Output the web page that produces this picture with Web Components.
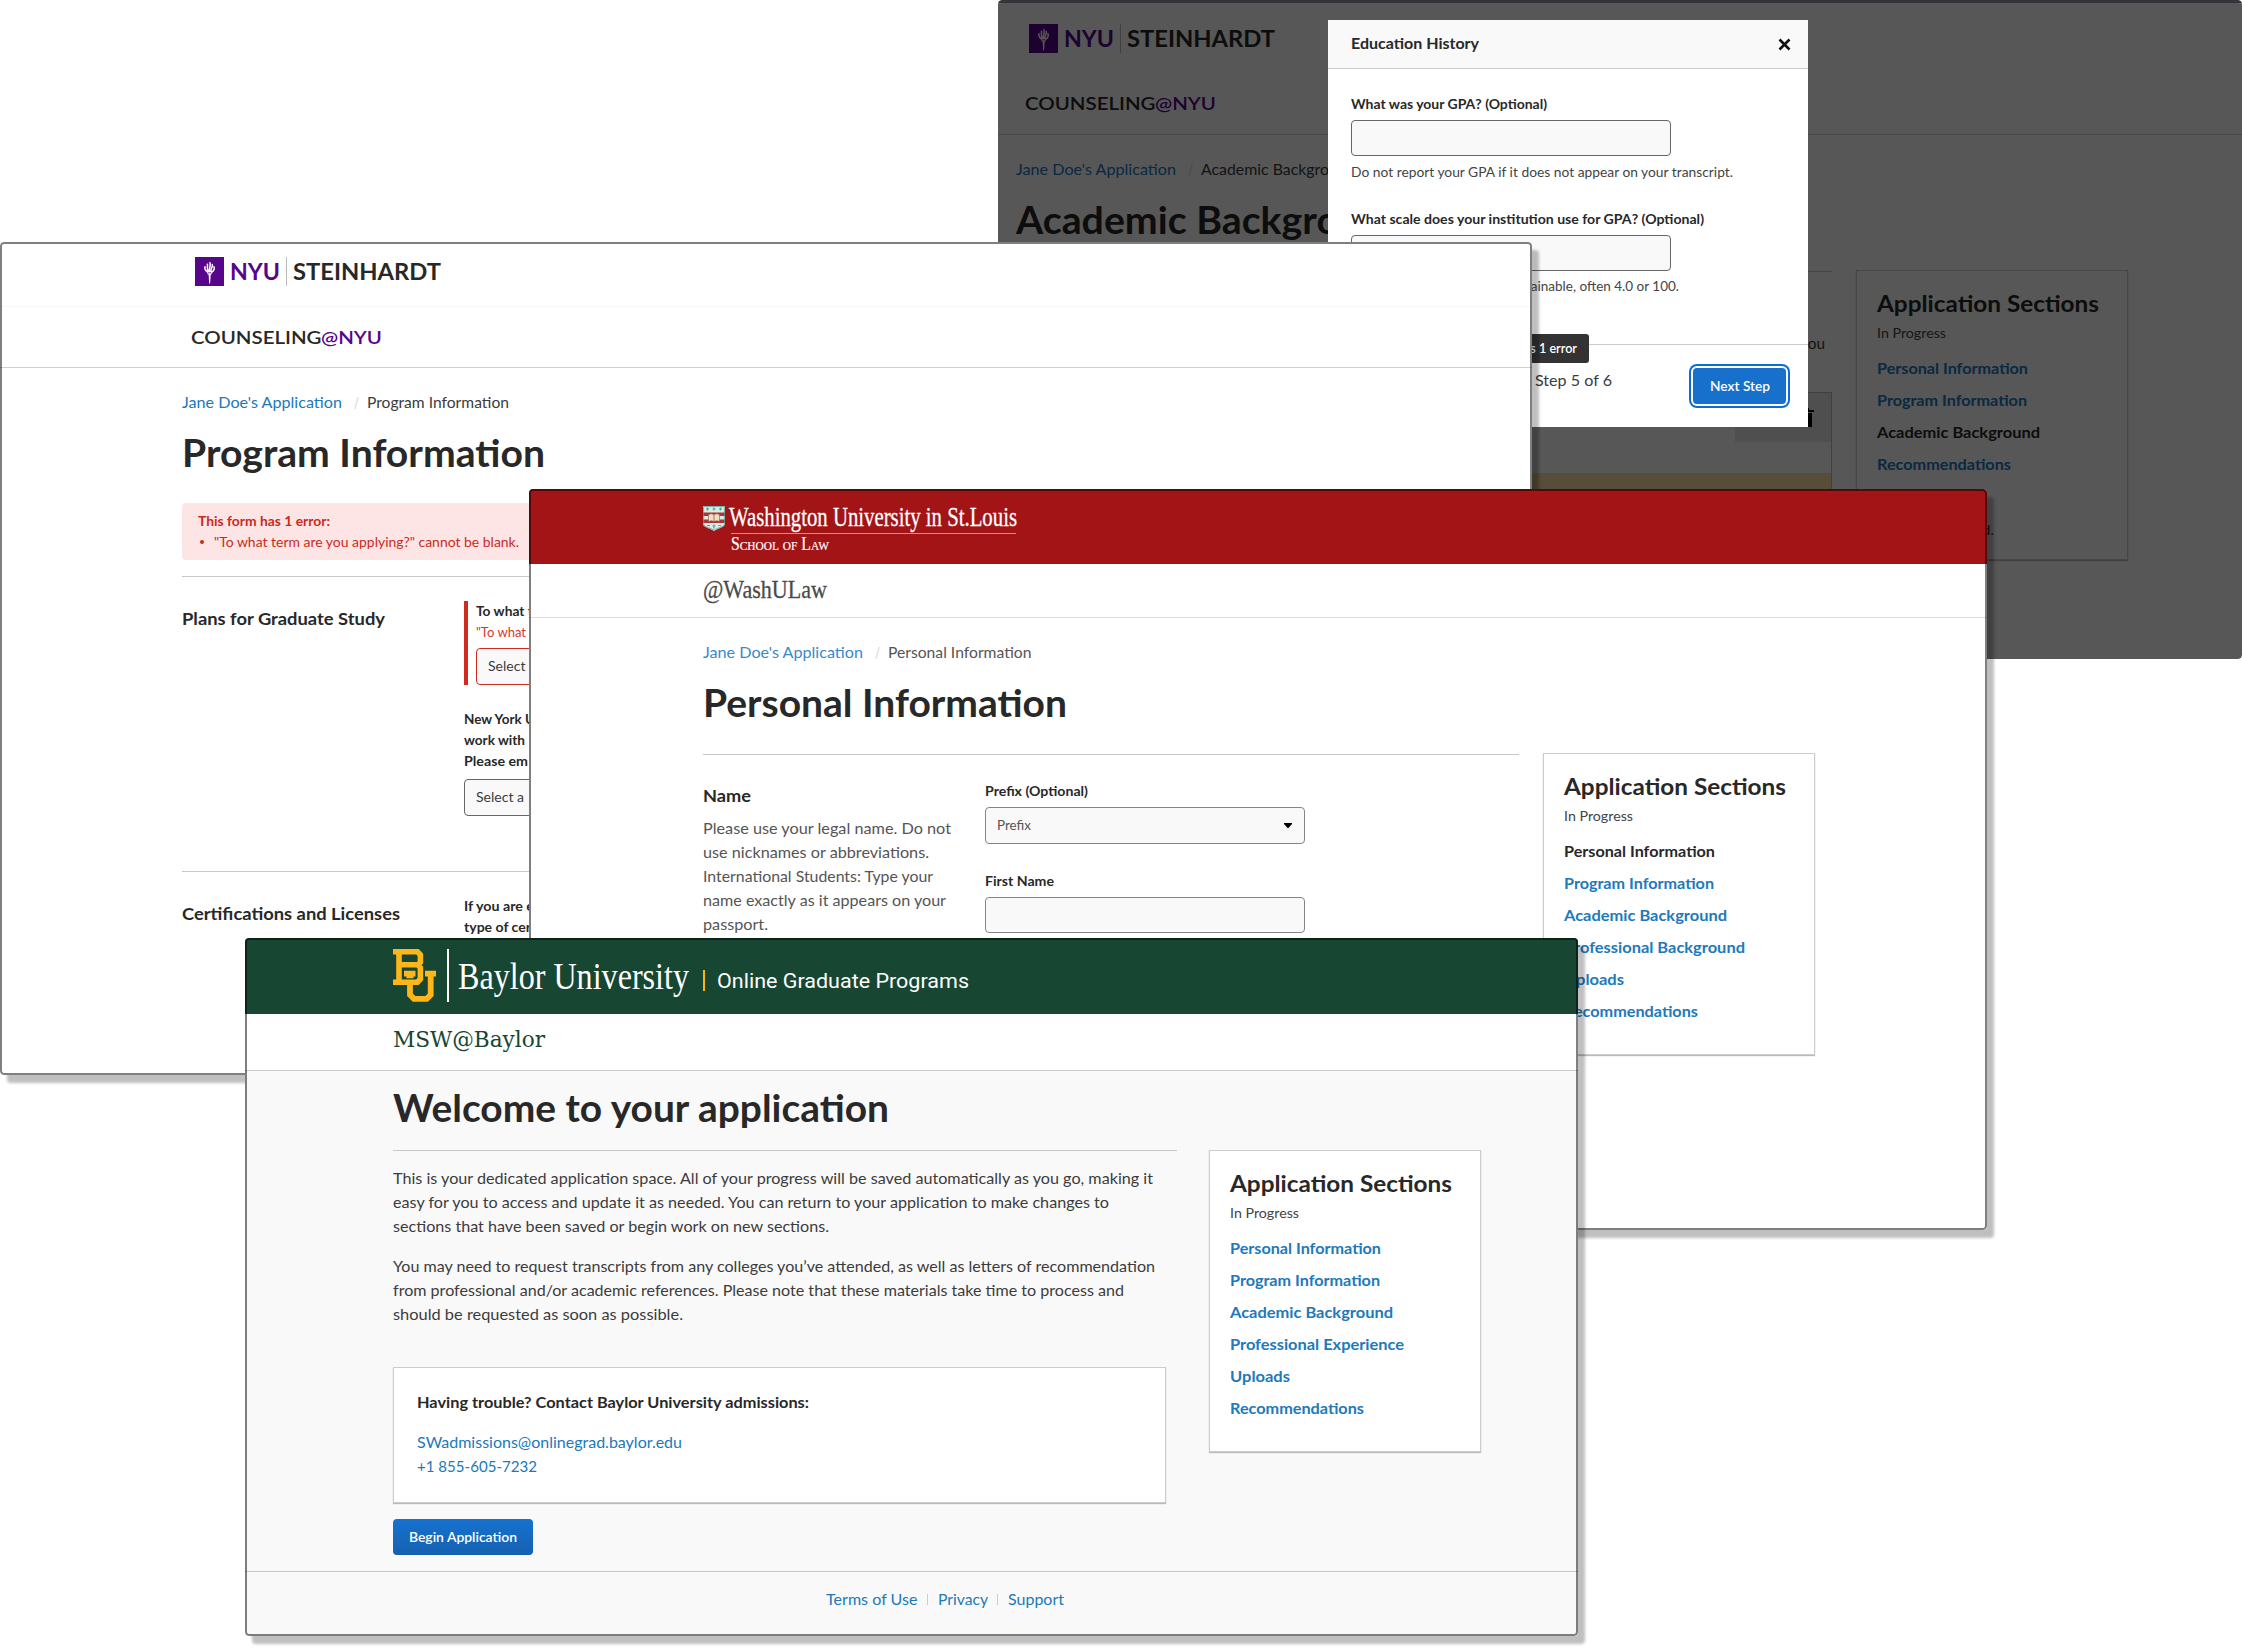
<!DOCTYPE html>
<html lang="en">
<head>
<meta charset="utf-8">
<title>Application portals</title>
<style>
html,body{margin:0;padding:0;background:#fff}
body{width:2242px;height:1648px;position:relative;overflow:hidden;font-family:Lato,sans-serif;color:#282828}
app-window{position:absolute}
.link{color:#2079bb}
.body{color:#3c3c3c}
.row{display:flex}
.col{display:flex;flex-direction:column}
.sep{width:1px;background:#ccc}
</style>
</head>
<body>

<app-window style="left:998px;top:0;width:1244px;height:659px" flat>
  <nyu-header style="--top:24px;--pad:30.5px"></nyu-header>
  <div class="row" style="padding-left:18px;gap:24px">
    <div class="col" style="width:816px">
      <crumb-trail page="Academic Backgro" page-width="128"></crumb-trail>
      <t-l d="59" s="38" w="323" b>Academic Backgro</t-l>
      <rule-line style="margin-top:37px"></rule-line>
      <t-l class="body" d="77" s="16" w="25" style="margin-left:784px">you</t-l>
      <record-table style="margin-top:43px"></record-table>
    </div>
    <section-card style="margin-top:135px;height:290px">
      <section-item w="151">Personal Information</section-item>
      <section-item w="150">Program Information</section-item>
      <section-item w="163" current>Academic Background</section-item>
      <section-item w="134">Recommendations</section-item>
      <t-l class="body" d="65" s="14" w="12" style="margin-left:105px">d.</t-l>
    </section-card>
  </div>
  <div slot="over"><history-dialog></history-dialog></div>
</app-window>

<app-window style="left:0;top:242px;width:1532px;height:833px">
  <nyu-header style="--top:15px;--pad:194.5px" tint></nyu-header>
  <div class="col" style="margin-left:182px;width:816px">
    <crumb-trail page="Program Information" page-width="142"></crumb-trail>
    <t-l d="59" s="38" w="363" b>Program Information</t-l>
    <error-box style="margin-top:36px"></error-box>
    <rule-line style="margin-top:16px"></rule-line>
    <div class="row" style="height:294px">
      <t-l d="48" s="17.5" w="203" b style="margin-right:79px">Plans for Graduate Study</t-l>
      <div class="col" style="padding-top:24px">
        <form-field invalid label="To what t" label-width="57" error='"To what t' error-width="58" value="Select a" value-width="48" select style="--w:308px"></form-field>
        <t-l d="39" s="13.3" w="71" b>New York U</t-l>
        <t-l d="21" s="13.3" w="61" b>work with</t-l>
        <t-l d="21" s="13.3" w="64" b>Please em</t-l>
        <form-field value="Select a" value-width="48" select style="--w:320px;margin-top:-8px"></form-field>
      </div>
    </div>
    <rule-line></rule-line>
    <div class="row">
      <t-l d="48" s="17.5" w="218" b style="margin-right:64px">Certifications and Licenses</t-l>
      <div class="col">
        <t-l d="39" s="13.3" w="70" b>If you are e</t-l>
        <t-l d="21" s="13.3" w="67" b>type of cer</t-l>
      </div>
    </div>
  </div>
</app-window>

<app-window style="left:529px;top:489px;width:1458px;height:741px">
  <washu-header></washu-header>
  <div class="row" style="padding-left:174px;gap:24px">
    <div class="col" style="width:816px">
      <crumb-trail page="Personal Information" page-width="143.5" soft></crumb-trail>
      <t-l d="59" s="38" w="364" b>Personal Information</t-l>
      <rule-line style="margin-top:37px"></rule-line>
      <div class="row">
        <div class="col" style="width:282px;color:#555">
          <t-l d="47" s="17.5" w="48" b style="color:#282828">Name</t-l>
          <t-l d="32" s="16" w="248">Please use your legal name. Do not</t-l>
          <t-l d="24" s="16" w="226">use nicknames or abbreviations.</t-l>
          <t-l d="24" s="16" w="230">International Students: Type your</t-l>
          <t-l d="24" s="16" w="243">name exactly as it appears on your</t-l>
          <t-l d="24" s="16" w="65">passport.</t-l>
        </div>
        <div class="col" style="padding-top:20px;gap:21px">
          <form-field label="Prefix (Optional)" label-width="103" value="Prefix" value-width="34" select style="--w:320px;--edge:#858585;--ink:#555"></form-field>
          <form-field label="First Name" label-width="69" style="--w:320px;--edge:#858585"></form-field>
        </div>
      </div>
    </div>
    <section-card style="margin-top:135px;height:302px">
      <section-item w="151" current>Personal Information</section-item>
      <section-item w="150">Program Information</section-item>
      <section-item w="163">Academic Background</section-item>
      <section-item w="181">Professional Background</section-item>
      <section-item w="60">Uploads</section-item>
      <section-item w="134">Recommendations</section-item>
    </section-card>
  </div>
</app-window>

<app-window style="left:245px;top:938px;width:1333px;height:698px;--bg:#f9f9f9">
  <baylor-header></baylor-header>
  <div class="row" style="padding-left:148px;gap:32px;height:500px">
    <div class="col" style="width:784px">
      <t-l d="51" s="38" w="496" b>Welcome to your application</t-l>
      <rule-line style="margin-top:28px"></rule-line>
      <div class="body">
        <t-l d="33" s="16" w="760">This is your dedicated application space. All of your progress will be saved automatically as you go, making it</t-l>
        <t-l d="24" s="16" w="716">easy for you to access and update it as needed. You can return to your application to make changes to</t-l>
        <t-l d="24" s="16" w="436">sections that have been saved or begin work on new sections.</t-l>
        <t-l d="40" s="16" w="762">You may need to request transcripts from any colleges you’ve attended, as well as letters of recommendation</t-l>
        <t-l d="24" s="16" w="731">from professional and/or academic references. Please note that these materials take time to process and</t-l>
        <t-l d="24" s="16" w="290">should be requested as soon as possible.</t-l>
      </div>
      <help-card style="margin-top:47px">
        <t-l d="40" s="16" w="392" b>Having trouble? Contact Baylor University admissions:</t-l>
        <t-l class="link" d="40" s="16" w="265">SWadmissions@onlinegrad.baylor.edu</t-l>
        <t-l class="link" d="24" s="16" w="120">+1 855-605-7232</t-l>
      </help-card>
      <action-button style="margin-top:16px;--w:140px" w="108">Begin Application</action-button>
    </div>
    <section-card style="margin-top:79px;height:302px">
      <section-item w="151">Personal Information</section-item>
      <section-item w="150">Program Information</section-item>
      <section-item w="163">Academic Background</section-item>
      <section-item w="174">Professional Experience</section-item>
      <section-item w="60">Uploads</section-item>
      <section-item w="134">Recommendations</section-item>
    </section-card>
  </div>
  <rule-line></rule-line>
  <div class="row link" style="padding-left:581px;gap:9.5px;align-items:flex-end">
    <t-l d="33" s="16" w="91.5">Terms of Use</t-l>
    <span class="sep" style="height:11px"></span>
    <t-l d="33" s="16" w="50">Privacy</t-l>
    <span class="sep" style="height:11px"></span>
    <t-l d="33" s="16" w="56">Support</t-l>
  </div>
</app-window>

<script>
const component = (name, html, setup) => customElements.define(name, class extends HTMLElement {
  connectedCallback() {
    if (this.shadowRoot) return;
    const root = this.attachShadow({ mode: 'open' });
    root.innerHTML = typeof html === 'function' ? html(this) : html;
    if (setup) setup(this, root);
  }
});

component('app-window', `
<style>
:host{display:block;box-sizing:border-box;border-radius:4px;box-shadow:7px 8px 3px rgba(0,0,0,.25)}
:host([flat]){box-shadow:none}
.in{position:relative;height:100%;overflow:hidden;border-radius:4px;background:var(--bg,#fff)}
.edge{position:absolute;inset:0;border:2px solid rgba(0,0,0,.5);border-radius:4px;pointer-events:none}
:host([flat]) .edge{border:0;border-top:3px solid #33343a;background:rgba(0,0,0,.66);background-clip:padding-box}
</style>
<div class="in"><slot></slot><div class="edge"></div><slot name="over"></slot></div>`);

component('rule-line', `<style>:host{display:block;height:1px;background:#c8c8c8}</style>`);

component('nyu-header', `
<style>
:host{display:block;border-bottom:1px solid #d0d0d0}
.top{display:flex;padding:var(--top) 0 20px var(--pad);height:29px;align-items:flex-start}
:host([tint]) .sub{border-top:1px solid #f7f7f7}
.top svg{display:block;margin-right:6px}
.v{width:1.5px;height:29px;background:#bbb;margin:0 5.5px 0 6px}
.sub{display:flex;padding-left:calc(var(--pad) - 4px);height:61px;box-sizing:border-box}
.p{color:#57068c}
</style>
<div class="top">
<svg width="29" height="29" viewBox="0 0 29 29"><rect width="29" height="29" fill="#57068c"/>
<path fill="#fff" d="M12.2 16.2h4.8l-.4 1.2h-.9l-.6 9h-.9l-.6-9h-.9z"/>
<path fill="none" stroke="#fff" stroke-width="1.5" stroke-linecap="round" d="M12.6 15.2C10.500 13.600 9.300 12 10 9.800M13.400 14.700C11.500 11.500 12.800 9.500 12.400 7.200M14.600 14.800C13.600 11.500 16 9 15 5.700M15.800 14.800C15.600 12 18 10 17.300 7.400M16.800 15.200C18.500 14 19.800 12 19 9.800"/></svg>
<t-l class="p" d="23" s="23" w="50" b>NYU</t-l><div class="v"></div><t-l d="23" s="23" w="148" b>STEINHARDT</t-l>
</div>
<div class="sub"><t-l d="37" s="18" w="130.500" m>COUNSELING</t-l><t-l class="p" d="37" s="18" w="61" m>@NYU</t-l></div>`);

component('crumb-trail', el => `
<style>:host{display:flex;gap:12px;color:#3c3c3c}
.a{color:#2079bb}:host([soft]) .a{color:#3a8ac8}:host([soft]){color:#555}.s{color:#ccc}</style>
<t-l class="a" d="40" s="16" w="160">Jane Doe's Application</t-l>
<t-l class="s" d="40" s="16" w="5">/</t-l>
<t-l d="40" s="16" w="${el.getAttribute('page-width')}" style="margin-left:-4px">${el.getAttribute('page')}</t-l>`);

component('section-card', `
<style>:host{display:block;box-sizing:border-box;width:272px;flex:none;background:#fff;border:1px solid #ccc;box-shadow:0 1px 1px #bbb;padding-left:20px}
.s{color:#444}</style>
<t-l d="41" s="22.500" w="222" b>Application Sections</t-l>
<t-l class="s" d="26" s="13.300" w="69">In Progress</t-l>
<div style="height:4px"></div><slot></slot>`);

component('section-item', el => `
<style>:host{display:block;color:#2079bb}:host([current]){color:#282828}</style>
<t-l d="32" s="16" w="${el.getAttribute('w')}" b>${el.textContent}</t-l>`);

component('error-box', `
<style>:host{display:block;box-sizing:border-box;height:57px;padding-left:16px;background:#fde5e5;border-radius:4px;color:#cc2a1b}
div{display:flex;align-items:flex-end}i{width:4px;height:4px;border-radius:50%;background:#cc2a1b;margin:0 10px 3px 1.500px}</style>
<t-l d="23" s="13.300" w="132" b>This form has 1 error:</t-l>
<div><i></i><t-l d="21" s="13.300" w="305">"To what term are you applying?" cannot be blank.</t-l></div>`);

component('form-field', el => {
  const g = n => el.getAttribute(n);
  return `
<style>
:host{display:block}
:host([invalid]){border-left:4px solid #d12b1d;padding-left:8px;--edge:#d12b1d}
.e{color:#d8372a}
.box{box-sizing:border-box;width:var(--w);height:36px;margin-top:11px;border:1px solid var(--edge,#666);border-radius:4px;background:#f9f9f9;padding-left:11px;display:flex;color:var(--ink,#3c3c3c)}
:host([select]) .box{height:37px}
svg{margin:15px 12px 0 auto}
</style>
${g('label') ? `<t-l d="${g('invalid') === null ? 21 : 15}" s="13.3" w="${g('label-width')}" b>${g('label')}</t-l>` : '<div style="height:10px"></div>'}
${g('error') ? `<t-l class="e" d="21" s="13.3" w="${g('error-width')}">${g('error')}</t-l>` : ''}
<div class="box">${g('value') ? `<t-l d="22" s="13.3" w="${g('value-width')}">${g('value')}</t-l>` : ''}
${g('select') !== null ? '<svg width="8" height="5"><path d="M0 0h8v1L4.500 5h-1L0 1z" fill="#000"/></svg>' : ''}</div>`;
});

component('record-table', `
<style>:host{display:block;box-sizing:border-box;height:160px;border:1px solid #bbb}
.h{height:49px;display:flex;justify-content:flex-end}
.t{width:96px;background:#e6e6e6}
.w{height:60px;margin-top:31px;background:#ffe3a8}svg{display:block;margin:15px 0 0 63px}</style>
<div class="h"><div class="t"><svg width="17" height="19"><path fill="#000" d="M0 2h5V0h6v2h5v2H0zM2 5h12v14H2z"/></svg></div></div><div class="w"></div>`);

component('history-dialog', `
<style>
:host{position:absolute;left:330px;top:20px;width:480px;height:407px;background:#fff;display:block}
.hd{height:48px;background:#f9f9f9;border-bottom:1px solid #ccc;display:flex;padding:0 17px 0 23px;justify-content:space-between}
.hd svg{margin-top:17.500px}
.bd{padding:19px 23px 0;height:257px;box-sizing:border-box;display:flex;flex-direction:column}
.m{color:#444}
.ft{height:82px;border-top:1px solid #ccc;display:flex;justify-content:space-between;padding-left:207px;padding-right:22px}
.tip{position:absolute;left:140px;top:314px;width:121px;height:29px;box-sizing:border-box;background:#333;color:#fff;border-radius:3px;padding-right:12px;display:flex;justify-content:flex-end}
action-button{margin-top:23px}
</style>
<div class="hd"><t-l d="29" s="16" w="128" b>Education History</t-l><svg width="13" height="13"><path d="M1.500 1.500l10 10M11.500 1.500l-10 10" stroke="#111" stroke-width="2.600"/></svg></div>
<div class="bd">
<form-field label="What was your GPA? (Optional)" label-width="196" style="--w:320px"></form-field>
<t-l class="m" d="21" s="13.300" w="382">Do not report your GPA if it does not appear on your transcript.</t-l>
<form-field label="What scale does your institution use for GPA? (Optional)" label-width="353" style="--w:320px;margin-top:26px"></form-field>
<t-l class="m" d="20" s="13.300" w="153" style="margin-left:175px">tainable, often 4.0 or 100.</t-l>
</div>
<div class="ft" style="margin-top:18px"><t-l d="41" s="16" w="77" style="color:#3c3c3c">Step 5 of 6</t-l><action-button style="--w:93px" w="60" flat>Next Step</action-button></div>
<div class="tip"><t-l d="19" s="14" w="53" m>as 1 error</t-l></div>`);

component('help-card', `
<style>:host{display:block;box-sizing:border-box;width:773px;height:136px;background:#fff;border:1px solid #ccc;box-shadow:0 1px 1px #bbb;padding-left:23px}</style><slot></slot>`);

component('action-button', el => `
<style>:host{display:flex;box-sizing:border-box;width:var(--w);height:36px;border-radius:4px;background:linear-gradient(#1672d0,#1560b0);color:#fff;justify-content:center}
:host([flat]){background:#1670cc;box-shadow:0 0 0 2px #fff,0 0 0 4px #0b6bdb}</style>
<t-l d="23" s="13.300" w="${el.getAttribute('w')}" m>${el.textContent}</t-l>`);

component('washu-header', `
<style>
:host{display:block;border-bottom:1px solid #dcdcdc}
.bar{height:75px;background:#a31417;color:#fff;display:flex;padding-left:174px}
.bar svg{margin:17px 4px 0 0}
.u{height:1px;background:#d98a8a;margin:7px 0 0 2px;width:285px}
.sub{height:53px;padding-left:174px;color:#4a4a4a}
</style>
<div class="bar"><svg width="22" height="25" viewBox="0 0 22 25"><path d="M0 0h22v18c0 3-6 4-11 7C6 22 0 21 0 18z" fill="#dcebe4"/><path d="M0 6.500h22v3.500H0zM0 13.500h22V17H0z" fill="#a8353a"/><path d="M5.500 8.500q3-1.500 5.500 0 2.500-1.500 5.500 0v7q-3-1.500-5.500 0-2.500-1.500-5.500 0z" fill="#f1dfc4" stroke="#8d5448" stroke-width=".6"/><path d="M11 8.500v7" stroke="#a8353a" stroke-width=".7"/><g fill="none" stroke="#4fa598" stroke-width="1.200"><path d="M3 3h3M9.500 3h3M16 3h3M4.500 1.500v3M11 1.500v3M17.500 1.500v3M4 19.500h3M9.500 20h3M15 19.500h3M11 18.500v4"/><path d="M.6.600h20.800v17.300c0 3-6 3.500-10.400 6.300C6.500 21.400.6 21 .6 17.900z" stroke-width=".8"/></g></svg>
<div><t-l d="37" s="28" w="288" f="serif" style="-webkit-text-stroke:.3px">Washington University in St.Louis</t-l><div class="u"></div>
<t-l d="16" s="18" w="98" f="serif" style="margin-left:2px;font-variant:small-caps;-webkit-text-stroke:.2px">School of Law</t-l></div></div>
<div class="sub"><t-l d="34" s="26" w="124" f="serif" style="-webkit-text-stroke:.3px">@WashULaw</t-l></div>`);

component('baylor-header', `
<style>
:host{display:block;border-bottom:1px solid #ccc}
.bar{height:76px;background:#174633;color:#fff;display:flex;padding-left:148px}
.bar svg{margin:11px 11px 0 0}
.v{width:1.500px;height:53px;background:#fff;margin:11px 9.500px 0 -1px}
.y{width:2px;height:21px;background:#fdb515;margin:32px 11.500px 0 14px}
.sub{height:56px;padding-left:148px;color:#174633;background:#fff}
</style>
<div class="bar"><svg width="44" height="53" viewBox="0 0 44 53"><g fill="none" stroke="#fdb71a">
<path stroke-width="5.600" d="M0 2.800h24.500l2.900 3v7.400l-2.400 2.800 2.400 2.800v11.200l-2.900 3.200H0M6 3v30M6 15.800h19"/>
<path stroke-width="5.800" d="M17 34v11.800l4 4h12.700l4-4V24.500M11 24.600h11.500M32 24.600h11"/><path stroke-width="2.400" d="M13.500 28h7"/></g></svg>
<div class="v"></div><t-l d="51" s="37" w="231" f="serif">Baylor University</t-l><div class="y"></div>
<t-l d="50" s="20.500" w="252" f="roboto">Online Graduate Programs</t-l></div>
<div class="sub"><t-l d="34" s="23" w="152" f="book">MSW@Baylor</t-l></div>`);

/* One line of text: its box ends on the baseline, d px below its top, and its glyphs fill w px. */
const FACES = {
  lato: ['Lato, sans-serif', .987, .213],
  roboto: ['Roboto, sans-serif', .927, .244],
  serif: ['"Liberation Serif", serif', .891, .216],
  book: ['"DejaVu Serif Condensed","DejaVu Serif", serif', .939, .236]
};
component('t-l', el => {
  const g = n => el.getAttribute(n), s = +g('s'), d = +g('d');
  const [family, up, down] = FACES[g('f') || 'lato'];
  const lh = 2 * d - (Math.round(up * s) - Math.round(down * s));
  const weight = g('b') !== null ? 700 : g('m') !== null ? 600 : 400;
  return `<style>:host{display:block;flex:none;height:${d}px;width:${g('w')}px}
span{display:inline-block;vertical-align:top;white-space:nowrap;font:${weight} ${s}px/${lh}px ${family};font-variant:inherit;transform-origin:0 50%}</style><span><slot></slot></span>`;
}, (el, root) => {
  const span = root.querySelector('span'), w = +el.getAttribute('w');
  const natural = span.getBoundingClientRect().width;
  if (natural) span.style.transform = `scaleX(${w / natural})`;
});
</script>
</body>
</html>
